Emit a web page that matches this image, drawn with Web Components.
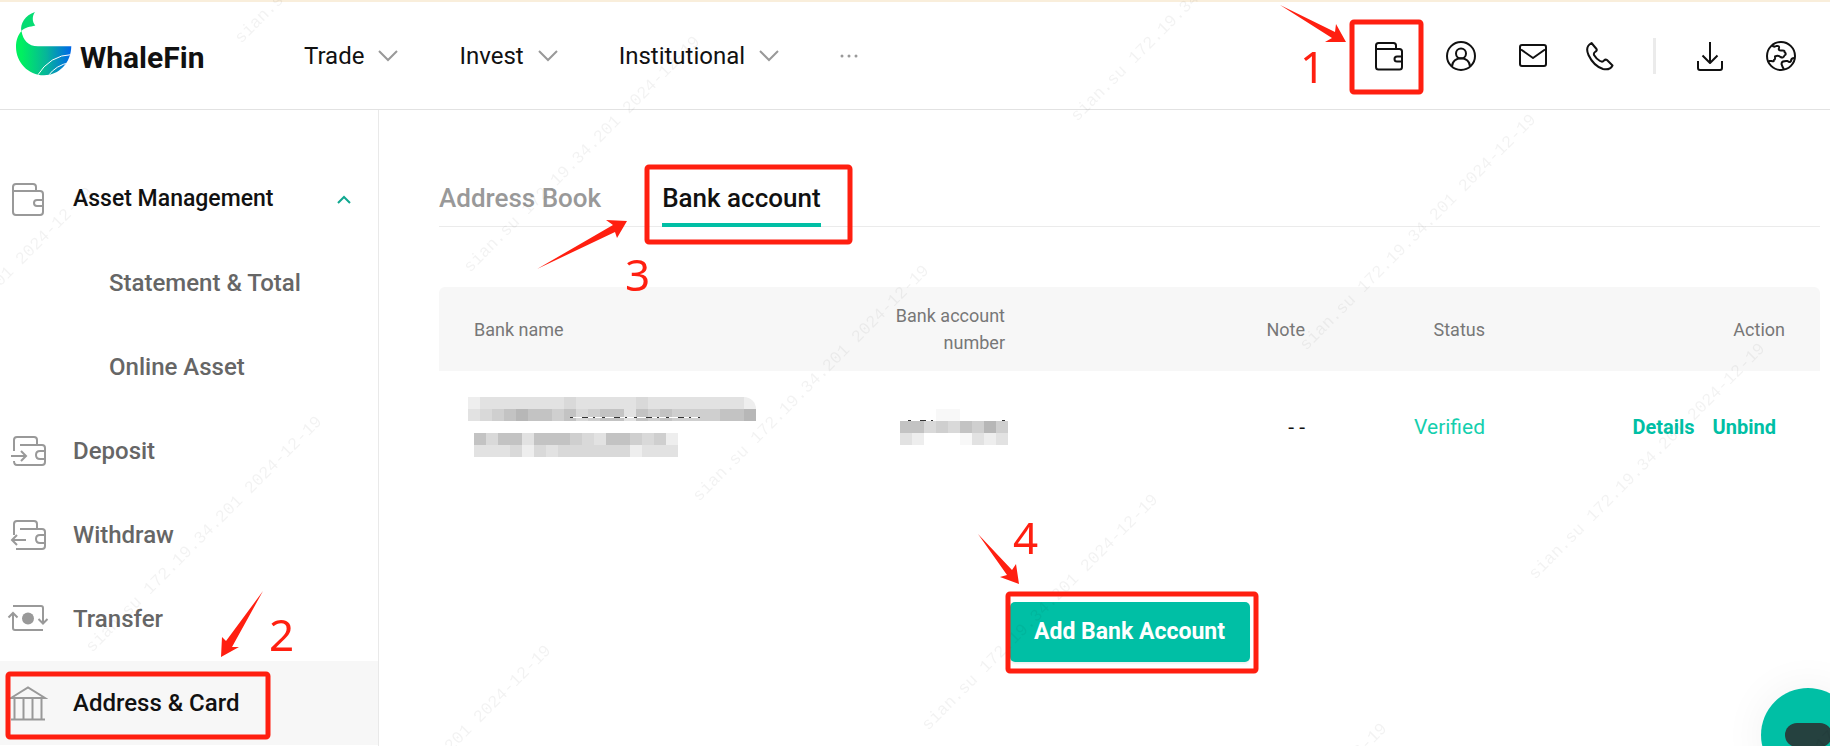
<!DOCTYPE html>
<html lang="en">
<head>
<meta charset="utf-8">
<meta name="viewport" content="width=device-width, initial-scale=1">
<title>WhaleFin - Bank account</title>
<style>
  body {
    margin: 0;
    min-height: 100vh;
    background: #fff;
    color: #111;
    font-family: Roboto, "Liberation Sans", sans-serif;
  }
</style>
</head>
<body>
<app-shell>
  <site-header slot="header"></site-header>
  <side-menu slot="menu">
    <menu-item icon="wallet" heading>Asset Management</menu-item>
    <menu-item>Statement &amp; Total</menu-item>
    <menu-item>Online Asset</menu-item>
    <menu-item icon="deposit">Deposit</menu-item>
    <menu-item icon="withdraw">Withdraw</menu-item>
    <menu-item icon="transfer">Transfer</menu-item>
    <menu-item icon="bank" active>Address &amp; Card</menu-item>
  </side-menu>
  <tab-bar>
    <a href="#book">Address Book</a>
    <a href="#bank" aria-current="page">Bank account</a>
  </tab-bar>
  <account-table></account-table>
  <add-account>Add Bank Account</add-account>
</app-shell>
<chat-bubble></chat-bubble>
<water-mark></water-mark>

<script>
const ICONS = {
  wallet: `<svg width="40" height="36" viewBox="0 0 40 36"><path d="M5 9V31q0 3 3 3H32q3 0 3-3V13q0-3-3-3H5M5 10V6q0-3 3-3H25q3 0 3 3v4M35 19H29q-3 0-3 3t3 3h6"/></svg>`,
  deposit: `<svg width="40" height="36" viewBox="0 0 40 36"><path d="M6 18V7q0-3 3-3H26q3 0 3 3v4M12 12H34q3 0 3 3V29q0 3-3 3H9q-3 0-3-4M37 18H32q-4 0-4 4t4 4h5M3 23H17M13 18l5 5-5 5"/></svg>`,
  withdraw: `<svg width="40" height="36" viewBox="0 0 40 36"><path d="M6 18V7q0-3 3-3H26q3 0 3 3v4M12 12H34q3 0 3 3V29q0 3-3 3H8M37 18H32q-4 0-4 4t4 4h5M4 23H18M9 18l-5 5 5 5"/></svg>`,
  transfer: `<svg width="40" height="36" viewBox="0 0 40 36" overflow="visible"><path d="M5 5H33q2 0 2 2V22M30.500 18l4.500 4.500 4.500-4.500M35 29H7q-2 0-2-2V12M.500 16.500L5 12l4.500 4.500"/><circle cx="20" cy="17.500" r="6" fill="currentColor" stroke="none"/></svg>`,
  bank: `<svg width="40" height="36" viewBox="0 0 40 36"><path d="M3 13L20 2.500 37 13ZM3 34.500H37M6.500 13V34M15.500 13V34M24.500 13V34M33.500 13V34"/></svg>`,
  chevron: `<svg width="20" height="12" viewBox="0 0 20 12" fill="none" stroke="#999" stroke-width="2"><path d="M1 1l9 9 9-9"/></svg>`
};

// red frame, arrow and step number laid over a control
class GuideMark extends HTMLElement {
  connectedCallback() {
    const [w, h] = this.getAttribute('size').split(' ');
    const [bx, by, bw, bh] = this.getAttribute('frame').split(' ');
    const [tx, ty] = this.getAttribute('label').split(' ');
    this.attachShadow({ mode: 'open' });
    this.shadowRoot.innerHTML = `
      <style>
        :host { position: absolute; pointer-events: none; z-index: 2; }
        svg { display: block; overflow: visible; }
        rect { fill: none; stroke: #ff1f10; stroke-width: 5; }
        polygon, text { fill: #ff1f10; }
        text { font: 44px "Noto Sans", sans-serif; }
      </style>
      <svg width="${w}" height="${h}" viewBox="0 0 ${w} ${h}">
        <rect x="${bx}" y="${by}" width="${bw}" height="${bh}" rx="2"/>
        <polygon points="${this.getAttribute('arrow')}"/>
        <text x="${tx}" y="${ty}">${this.getAttribute('step')}</text>
      </svg>
    `;
  }
}
customElements.define('guide-mark', GuideMark);

class AppShell extends HTMLElement {
  connectedCallback() {
    this.attachShadow({ mode: 'open' });
    this.shadowRoot.innerHTML = `
      <style>
        :host { display: flex; flex-direction: column; min-height: 100vh; }
        .body { display: flex; flex: 1; }
        main { flex: 1; min-width: 0; padding: 62px 10px 0 60px; }
      </style>
      <slot name="header"></slot>
      <div class="body">
        <slot name="menu"></slot>
        <main><slot></slot></main>
      </div>
    `;
  }
}
customElements.define('app-shell', AppShell);

class SiteHeader extends HTMLElement {
  connectedCallback() {
    this.attachShadow({ mode: 'open' });
    this.shadowRoot.innerHTML = `
      <style>
        :host {
          display: block;
          position: relative;
          border-top: 2px solid #f9eedb;
          border-bottom: 1px solid #e2e2e2;
        }
        header {
          display: flex;
          align-items: center;
          height: 107px;
          padding: 0 34px 0 16px;
        }
        .logo {
          display: flex;
          align-items: center;
          gap: 8px;
          width: 288px;
          height: 88px;
          color: #111;
          font-size: 30px;
          font-weight: 700;
          line-height: 40px;
          text-decoration: none;
        }
        .logo svg { align-self: flex-start; }
        .logo span { padding-top: 4px; }
        nav { display: flex; align-items: center; gap: 61px; }
        button {
          display: flex;
          align-items: center;
          gap: 14px;
          padding: 0;
          border: 0;
          background: none;
          color: #111;
          font: 24px/32px Roboto, sans-serif;
          cursor: pointer;
        }
        .tools { display: flex; align-items: center; gap: 39px; margin-left: auto; }
        .group { display: flex; align-items: center; gap: 43px; }
        .tools svg { fill: none; stroke: #111; stroke-width: 2; stroke-linejoin: round; }
        .line { width: 3px; height: 36px; background: #ebebeb; }
        guide-mark { top: -2px; right: 405px; }
      </style>
      <header>
        <a class="logo" href="#home">
          <svg width="56" height="64" viewBox="16 12 56 64">
            <defs>
              <linearGradient id="sea" x1="0" x2="1"><stop offset=".1" stop-color="#00f060"/><stop offset=".55" stop-color="#06b59a"/><stop offset="1" stop-color="#0066ea"/></linearGradient>
              <clipPath id="hull"><path d="M21.500 31C23 40 28 46.300 38 46.300H71.300C71 63 59 75.300 44 75.300C28 75.300 16 62 16 47C16 40 18 35 21.500 31Z"/></clipPath>
            </defs>
            <path fill="#06dc73" d="M35 12C25 15 20 24 21.300 31C25 27 30 27 35.300 25.500C32 22 32 16 35 12Z"/>
            <path fill="url(#sea)" d="M21.500 31C23 40 28 46.300 38 46.300H71.300C71 63 59 75.300 44 75.300C28 75.300 16 62 16 47C16 40 18 35 21.500 31Z"/>
            <path clip-path="url(#hull)" fill="none" stroke="#fff" d="M37 76Q50 55 72 54.500M48 76Q56 65 70 62.500"/>
          </svg>
          <span>WhaleFin</span>
        </a>
        <nav>
          <button>Trade ${ICONS.chevron}</button>
          <button>Invest ${ICONS.chevron}</button>
          <button>Institutional ${ICONS.chevron}</button>
          <button aria-label="More"><svg width="18" height="4" viewBox="0 0 18 4" fill="#999"><circle cx="2" cy="2" r="1.500"/><circle cx="9" cy="2" r="1.500"/><circle cx="16" cy="2" r="1.500"/></svg></button>
        </nav>
        <div class="tools">
          <div class="group">
            <button aria-label="Assets"><svg width="28" height="30" viewBox="0 0 28 30"><path d="M1 8V26q0 2.500 2.500 2.500h21q2.500 0 2.500-2.500V10.500q0-2.500-2.500-2.500H1V4.500Q1 2 3.500 2h15Q21 2 21 4.500V8M27 15.500H22q-2.500 0-2.500 2.500t2.500 2.500h5"/></svg></button>
            <button aria-label="Profile"><svg width="30" height="30" viewBox="0 0 30 30"><circle cx="15" cy="15" r="14"/><circle cx="15" cy="12.500" r="5"/><path d="M6 25.500C6.500 14.500 23.500 14.500 24 25.500"/></svg></button>
            <button aria-label="Mail"><svg width="28" height="24" viewBox="0 0 28 24"><rect x="1" y="1" width="26" height="21" rx="2"/><path d="M2 5.500l12 8.500 12-8.500"/></svg></button>
          </div>
          <button aria-label="Phone"><svg width="28" height="30" viewBox="0 0 28 30"><path d="M5.500 2C1 4.500 0 8.500 2.500 14C6 21.500 11 26 17 28C21.500 29 25 27.500 26.500 24.500L21 19Q19.500 18 18 19.500Q16.500 21.500 14 20Q10 17.500 8 14Q7.500 12 9 11Q11.500 9.500 10.500 8Z"/></svg></button>
          <div class="line"></div>
          <div class="group">
            <button aria-label="Download"><svg width="28" height="30" viewBox="0 0 28 30"><path d="M15 1V22M7.500 14.500L15 22l7.500-7.500M3 20V27q0 2 2 2H25q2 0 2-2V20"/></svg></button>
            <button aria-label="Language"><svg width="30" height="30" viewBox="0 0 30 30"><circle cx="15" cy="15" r="14"/><path d="M6 4.500Q8 6.500 10.500 5Q13.500 4.500 13 7Q12 9.500 15 9.500Q19 9 18.500 11Q21 13 18.500 14.500Q17.500 17.500 14.500 16Q12 14 9 15.500Q9.500 18.500 8 19Q8 21 5.500 20H2.500M28.500 17Q25 17 25 20Q24 22 21.500 20Q15.500 19.500 15.500 23Q16 25 18 28.500"/></svg></button>
          </div>
        </div>
      </header>
      <guide-mark step="1" size="150 100" frame="77 22 69 70" label="25 83"
        arrow="5,5 60,32 61,24 71,42 50,42 57,38"></guide-mark>
    `;
  }
}
customElements.define('site-header', SiteHeader);

class SideMenu extends HTMLElement {
  connectedCallback() {
    this.attachShadow({ mode: 'open' });
    this.shadowRoot.innerHTML = `
      <style>
        :host {
          display: block;
          position: relative;
          flex: 0 0 378px;
          border-right: 1px solid #e9e9e9;
        }
        nav { padding-top: 47px; }
        guide-mark { left: 0; bottom: 0; }
      </style>
      <nav><slot></slot></nav>
      <guide-mark step="2" size="300 160" frame="8 88 260 63" label="269 65"
        arrow="263,5 232,61 239,61 221,71 222,51 226,55"></guide-mark>
    `;
  }
}
customElements.define('side-menu', SideMenu);

class MenuItem extends HTMLElement {
  connectedCallback() {
    const icon = this.getAttribute('icon');
    this.attachShadow({ mode: 'open' });
    this.shadowRoot.innerHTML = `
      <style>
        :host { display: block; }
        a {
          display: flex;
          align-items: center;
          height: 84px;
          padding: 0 27px 0 8px;
          color: #666;
          font-size: 24px;
          font-weight: 500;
          line-height: 32px;
          text-decoration: none;
        }
        .icon {
          display: flex;
          width: 65px;
          color: #999;
          fill: none;
          stroke: currentColor;
          stroke-width: 2;
        }
        a.sub { padding-left: 109px; }
        .up { margin-left: auto; }
        :host([heading]) a { color: #111; font-size: 23px; }
        :host([active]) a { background: #f7f7f7; color: #111; }
      </style>
      <a href="#item" class="${icon ? '' : 'sub'}">
        ${icon ? `<span class="icon">${ICONS[icon]}</span>` : ''}
        <slot></slot>
        ${this.hasAttribute('heading') ? '<svg class="up" width="14" height="9" viewBox="0 0 14 9" fill="none" stroke="#10a890" stroke-width="2"><path d="M1 8l6-6 6 6"/></svg>' : ''}
      </a>
    `;
  }
}
customElements.define('menu-item', MenuItem);

class TabBar extends HTMLElement {
  connectedCallback() {
    this.attachShadow({ mode: 'open' });
    this.shadowRoot.innerHTML = `
      <style>
        :host { display: block; position: relative; }
        nav {
          display: flex;
          gap: 61px;
          border-bottom: 1px solid #ebebeb;
        }
        ::slotted(a) {
          margin-bottom: -1px;
          padding: 6px 0 5px;
          border-bottom: 4px solid transparent;
          color: #999;
          font-size: 26px;
          font-weight: 500;
          line-height: 40px;
          text-decoration: none;
        }
        ::slotted(a[aria-current]) { border-color: #00bfa5; color: #111; }
        guide-mark { left: 97px; top: -9px; }
      </style>
      <nav><slot></slot></nav>
      <guide-mark step="3" size="320 130" frame="111 4 203 75" label="89 128"
        arrow="1,106 77,62 70,57 91,58 81,75 79,69"></guide-mark>
    `;
  }
}
customElements.define('tab-bar', TabBar);

// hidden account data, drawn as 12px blocks; each letter is a grey level,
// a leading ">" moves the row in by half a block
class MaskedText extends HTMLElement {
  connectedCallback() {
    const levels = { a: '#b7b7b7', b: '#c3c3c3', c: '#cfcfcf', d: '#d9d9d9', e: '#e2e2e2', f: '#eeeeee', g: '#f8f8f8' };
    const rows = this.getAttribute('rows').split(',');
    let blocks = '';
    rows.forEach((row, r) => {
      const inset = row[0] === '>' ? 6 : 0;
      [...row.replace('>', '')].forEach((c, i) => {
        if (levels[c]) blocks += `<rect x="${inset + i * 12}" y="${r * 12}" width="12" height="12" fill="${levels[c]}"/>`;
      });
    });
    this.attachShadow({ mode: 'open' });
    this.shadowRoot.innerHTML = `
      <style>
        :host { display: inline-block; vertical-align: middle; }
        svg { display: block; border-radius: 0 12px 0 0; }
      </style>
      <svg width="${rows[0].length * 12}" height="${rows.length * 12}" shape-rendering="crispEdges">${blocks}
        <path d="${this.getAttribute('trace')}" stroke="#fff" fill="none"/>
        <path d="${this.getAttribute('trace')}" stroke="#333" stroke-dasharray="3 9 6 5 2 7" fill="none"/>
      </svg>
    `;
  }
}
customElements.define('masked-text', MaskedText);

class AccountTable extends HTMLElement {
  connectedCallback() {
    this.attachShadow({ mode: 'open' });
    this.shadowRoot.innerHTML = `
      <style>
        :host { display: block; margin-top: 60px; }
        table { width: 100%; border-collapse: collapse; table-layout: fixed; }
        th, td { padding: 0 35px; text-align: right; }
        th {
          height: 84px;
          background: #f7f7f7;
          color: #777;
          font-size: 18px;
          font-weight: 400;
          line-height: 27px;
        }
        th:first-child, td:first-child { text-align: left; }
        th:first-child { border-radius: 6px 0 0 0; }
        th:last-child { border-radius: 0 6px 0 0; }
        td { height: 112px; font-size: 21px; line-height: 28px; }
        .mid { width: 180px; box-sizing: border-box; }
        .wide { width: 300px; box-sizing: border-box; }
        .name { margin-left: -6px; }
        .number { margin-right: -3px; }
        .ok { color: #14cfae; }
        .links { display: flex; justify-content: flex-end; gap: 18px; padding-right: 9px; }
        .links a { color: #00bfa5; font-size: 20px; font-weight: 700; text-decoration: none; }
      </style>
      <table>
        <thead>
          <tr>
            <th>Bank name</th>
            <th class="mid">Bank account number</th>
            <th class="wide">Note</th>
            <th class="mid">Status</th>
            <th class="wide">Action</th>
          </tr>
        </thead>
        <tbody>
          <tr>
            <td><masked-text class="name" rows="feeeeeeedeeeeedeeeeeeeef,edcbabbcbdcbbebcbccccbba,-,>bdbbebbbcdebbcdcf,>eeedfdeddddddfeee" trace="M102 20H232"></masked-text></td>
            <td><masked-text class="number" rows="...gg....,bbdcdbcac,ef...gefe" trace="M8 11H34M102 11H105"></masked-text></td>
            <td>- -</td>
            <td class="ok">Verified</td>
            <td><div class="links"><a href="#details">Details</a><a href="#unbind">Unbind</a></div></td>
          </tr>
        </tbody>
      </table>
    `;
  }
}
customElements.define('account-table', AccountTable);

class AddAccount extends HTMLElement {
  connectedCallback() {
    this.attachShadow({ mode: 'open' });
    this.shadowRoot.innerHTML = `
      <style>
        :host { display: flex; justify-content: center; margin-top: 119px; }
        .wrap { position: relative; }
        button {
          display: block;
          width: 240px;
          height: 60px;
          padding: 0;
          border: 0;
          border-radius: 5px;
          background: #00bfa5;
          box-shadow: 0 2px 2px rgba(0,0,0,0.06);
          color: #fff;
          font: 700 23px/32px Roboto, sans-serif;
          cursor: pointer;
        }
        guide-mark { left: -40px; top: -82px; }
      </style>
      <div class="wrap">
        <button><slot></slot></button>
        <guide-mark step="4" size="300 160" frame="38 74 248 77" label="43 34"
          arrow="8,14 42,50 46,44 49,64 30,57 37,55"></guide-mark>
      </div>
    `;
  }
}
customElements.define('add-account', AddAccount);

class ChatBubble extends HTMLElement {
  connectedCallback() {
    this.attachShadow({ mode: 'open' });
    this.shadowRoot.innerHTML = `
      <style>
        :host { position: fixed; right: -25px; bottom: -36px; }
        button {
          display: flex;
          align-items: center;
          justify-content: center;
          width: 94px;
          height: 94px;
          padding: 0;
          border: 0;
          border-radius: 50%;
          background: #00bfa5;
          box-shadow: 0 0 44px rgba(0,0,0,0.06);
        }
        span { width: 47px; height: 24px; border-radius: 12px; background: #25413f; }
      </style>
      <button aria-label="Chat"><span></span></button>
    `;
  }
}
customElements.define('chat-bubble', ChatBubble);

class WaterMark extends HTMLElement {
  connectedCallback() {
    let marks = '';
    // diagonal lattice: one step down-right, one step to the next band
    for (let band = -1; band < 4; band++) {
      for (let step = -3; step < 6; step++) {
        const x = 241 + step * 229 + band * 607;
        const y = 44 + step * 229 - band * 151;
        if (x < -230 || x > innerWidth || y < 0 || y > innerHeight + 230) continue;
        marks += `<text transform="translate(${x} ${y}) rotate(-45)">sian.su 172.19.34.201 2024-12-19</text>`;
      }
    }
    this.attachShadow({ mode: 'open' });
    this.shadowRoot.innerHTML = `
      <style>
        :host { position: fixed; inset: 0; overflow: hidden; pointer-events: none; }
        svg { display: block; width: 100%; height: 100%; }
        text { font: 17px "Liberation Mono", monospace; fill: rgba(0,0,0,0.05); }
      </style>
      <svg aria-hidden="true">${marks}</svg>
    `;
  }
}
customElements.define('water-mark', WaterMark);
</script>
</body>
</html>
